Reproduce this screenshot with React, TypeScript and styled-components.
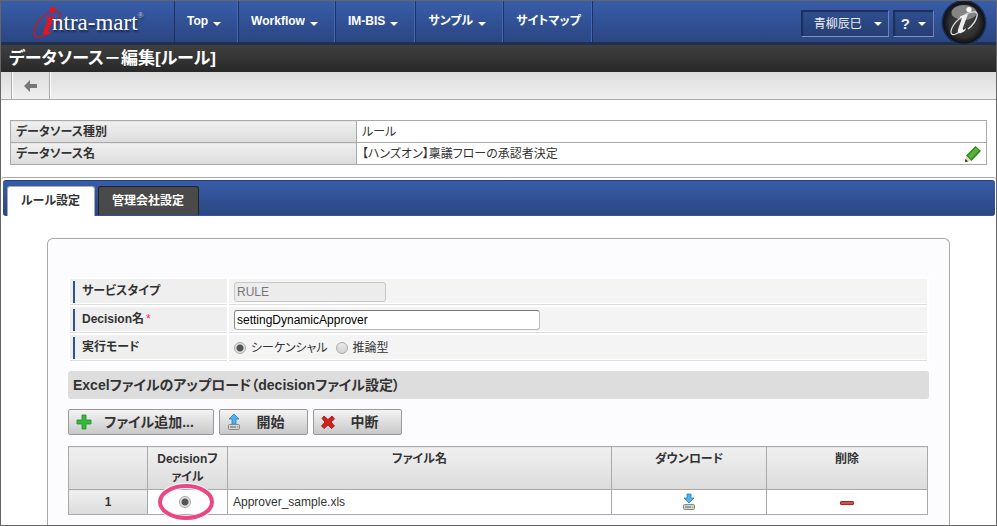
import React from "react";
import styled, { createGlobalStyle, css } from "styled-components";

const GlobalStyle = createGlobalStyle`
  *, *::before, *::after { box-sizing: border-box; }
  body {
    margin: 0;
    background: #fff;
    color: #333;
    font: 12px/18px "Liberation Sans", "Noto Sans CJK JP", sans-serif;
    font-feature-settings: "palt";
  }
  button, input { font: inherit; font-feature-settings: inherit; }
`;

const line = "#a9a9a9";
const blueGradient = "linear-gradient(#385da9, #2b4682)";
const greyGradient = "linear-gradient(#f0f0f0, #dcdcdc)";

const Page = styled.div`
  display: flex;
  flex-direction: column;
  height: 100vh;
  overflow: hidden;
  border: 1px solid #666;
`;

const Header = styled.header`
  display: flex;
  flex: none;
  height: 44px;
  border-bottom: 3px solid #20304f;
  background: ${blueGradient};
`;

const Logo = styled.a`
  display: flex;
  width: 173px;
  padding: 4px 0 0 31px;
  color: #fff;
  text-decoration: none;
  font: 23px/36px "Liberation Serif", serif;
  text-shadow: 1px 2px 2px rgba(0, 0, 0, 0.5);
  svg { flex: none; margin-right: -12px; }
  sup { font-size: 8px; line-height: 22px; color: #c8d2e8; }
`;

const Nav = styled.nav`
  display: flex;
  border-right: 1px solid #1e3260;
`;

const NavLink = styled.a`
  display: flex;
  align-items: center;
  gap: 5px;
  padding: 0 16px 2px 12px;
  border-left: 1px solid #1e3260;
  border-right: 1px solid #4069c0;
  color: #fff;
  font-weight: bold;
  text-decoration: none;
  white-space: nowrap;
  &:last-child { padding-right: 10px; }
`;

const Caret = styled.span<{ $low?: boolean }>`
  border: 4px solid transparent;
  border-top-color: #fff;
  border-bottom: 0;
  ${(p) => p.$low && css`margin-top: 7px;`}
`;

const HeaderTools = styled.div`
  display: flex;
  flex: 1;
  align-items: flex-start;
  justify-content: flex-end;
  gap: 4px;
  padding-right: 9px;
`;

const MenuButton = styled.button`
  display: flex;
  align-items: center;
  gap: 12px;
  height: 27px;
  margin-top: 9px;
  padding: 0 6px 0 12px;
  border: 1px solid #1c2e5a;
  border-bottom-color: #7b93c6;
  border-right-color: #6882bb;
  background: linear-gradient(#2f4f91, #263e72);
  box-shadow: inset 1px 1px 1px #1c2e5a;
  color: #eee;
`;

const HelpButton = styled(MenuButton)`
  gap: 8px;
  padding: 0 7px;
  font-size: 15px;
  font-weight: bold;
`;

const Badge = styled.a`
  height: 45px;
  margin: -1px 0 0 3px;
  z-index: 1;
`;

const TitleBar = styled.h1`
  flex: none;
  height: 27px;
  margin: 0;
  padding: 0 8px;
  background: linear-gradient(#404040, #282828);
  color: #fff;
  font-size: 17px;
  line-height: 28px;
`;

const Toolbar = styled.div`
  display: flex;
  flex: none;
  height: 28px;
  padding-left: 10px;
  border-bottom: 1px solid ${line};
  background: linear-gradient(#dcdcdc, #f0f0f0);
`;

const BackButton = styled.button`
  width: 39px;
  padding: 0;
  border: solid ${line};
  border-width: 0 1px;
  background: none;
  box-shadow: inset 1px 0 #fff, 1px 0 #fff;
  svg { display: block; margin: 0 auto; }
`;

const InfoTable = styled.table`
  width: calc(100% - 18px);
  margin: 20px 9px 12px;
  border-collapse: collapse;
  table-layout: fixed;
  th, td {
    height: 22px;
    padding: 0 5px;
    border: 1px solid ${line};
    line-height: 20px;
    text-align: left;
  }
  th { width: 346px; background: ${greyGradient}; }
`;

const InfoValue = styled.div`
  display: flex;
  align-items: center;
  justify-content: space-between;
  height: 21px;
`;

const IconButton = styled.button`
  padding: 0;
  border: 0;
  background: none;
  line-height: 0;
`;

const Panel = styled.main`
  display: flex;
  flex: 1;
  flex-direction: column;
  min-height: 0;
  padding-top: 2px;
  border-top: 1px solid ${line};
  border-radius: 3px 3px 0 0;
`;

const Tabs = styled.div`
  display: flex;
  flex: none;
  gap: 3px;
  height: 36px;
  margin: 0 1px 0 2px;
  padding: 5px 4px 0;
  border: 1px solid #2f519c;
  border-width: 1px 0;
  border-top-color: #24407c;
  border-radius: 3px;
  background: ${blueGradient};
`;

const Tab = styled.button<{ $active?: boolean }>`
  padding: 0 14px 1px 13px;
  border: 1px solid ${(p) => (p.$active ? "#aaa" : "#222")};
  border-bottom: 0;
  border-radius: 3px 3px 0 0;
  background: ${(p) => (p.$active ? "#fff" : "#4a4a4a")};
  color: ${(p) => (p.$active ? "#333" : "#fff")};
  font-weight: bold;
  ${(p) => p.$active && css`margin-bottom: -1px;`}
`;

const Box = styled.section`
  flex: 1;
  min-height: 0;
  margin: 22px 46px 0;
  padding: 38px 20px 0;
  border: 1px solid ${line};
  border-bottom: 0;
  border-radius: 6px 6px 0 0;
  background: #fcfcfe;
`;

const FormTable = styled.table`
  width: 100%;
  border-spacing: 2px;
  table-layout: fixed;
  background: #fff;
  th, td {
    height: 26px;
    border-bottom: 1px solid #ddd;
    box-shadow: inset 0 -1px #fff;
    text-align: left;
  }
  th { width: 157px; padding: 0 3px; background: #efefef; }
  td { padding: 0 5px; background: #f4f4f4; }
`;

const FieldLabel = styled.label`
  display: block;
  height: 22px;
  padding-left: 7px;
  border-left: 2px solid #2f519c;
  line-height: 20px;
`;

const Required = styled.span`
  margin-left: 2px;
  color: #e33;
  font-weight: normal;
`;

const TextInput = styled.input<{ $width: number }>`
  display: block;
  width: ${(p) => p.$width}px;
  height: 20px;
  padding: 0 2px;
  border: 1px solid #bbb;
  border-top-color: #777;
  border-left-color: #888;
  border-radius: 3px;
  background: #fff;
  color: #000;
  &:disabled { border-color: #c8c8c8; background: #ececec; color: #777; }
`;

const Radios = styled.div`
  display: flex;
  align-items: center;
  gap: 8px;
  label { display: flex; align-items: center; gap: 5px; }
`;

const Radio = styled.input`
  appearance: none;
  width: 12px;
  height: 12px;
  margin: 0;
  border: 1px solid #aaa;
  border-radius: 50%;
  background: linear-gradient(#e8e8e8, #d4d4d4);
  &:checked { background: radial-gradient(#555 0 3px, #e2e2e2 4px); }
`;

const SectionTitle = styled.h2`
  height: 28px;
  margin: 8px 0 10px;
  padding: 0 5px;
  border-radius: 3px;
  background: #ddd;
  font-size: 14px;
  line-height: 28px;
`;

const Actions = styled.div`
  display: flex;
  gap: 5px;
  margin-bottom: 11px;
`;

const ActionButton = styled.button<{ $wide?: boolean }>`
  display: flex;
  align-items: center;
  width: ${(p) => (p.$wide ? 146 : 89)}px;
  height: 26px;
  padding: 0 8px 0 6px;
  border: 1px solid #999;
  border-radius: 2px;
  background: linear-gradient(#f4f4f4, #c8c8c8);
  color: #333;
  font-size: 14px;
  font-weight: bold;
  line-height: 20px;
  svg { flex: none; }
  span { flex: 1; }
`;

const FileTable = styled.table`
  width: calc(100% - 1px);
  border-collapse: collapse;
  table-layout: fixed;
  th, td {
    height: 25px;
    padding: 0 5px;
    border: 1px solid ${line};
    background: #fff;
    text-align: center;
  }
  th { background: ${greyGradient}; }
  thead th { height: 43px; padding: 3px 5px; vertical-align: top; }
  td svg { display: inline-block; vertical-align: middle; }
`;

const Column = styled.col<{ $width: number }>`
  width: ${(p) => p.$width}px;
`;

const NameCell = styled.td`
  && { text-align: left; }
`;

const MarkedRadio = styled.div`
  position: relative;
  display: flex;
  justify-content: center;
  padding-right: 5px;
`;

const Mark = styled.svg`
  position: absolute;
  top: -15px;
  left: 3px;
  pointer-events: none;
`;

const LogoMark = () => (
  <svg width="32" height="36" viewBox="0 0 32 36" fill="none">
    <path d="M14 29C8 33 2 34 2 28C2 20 10 10 18 7C24 5 28 6 28 10C28 14 25 19 21 22" stroke="#d8131c" strokeWidth="1.3" />
    <path d="M14 12.500l8-1.500-5 13.500c-1 3 0 3.500 2.500 1.500l-.5 1.500c-4 4-9.500 3-7.500-2L16 14.500l-2-.5z" fill="#e8131c" />
    <circle cx="20.500" cy="5" r="3" fill="#e8131c" />
  </svg>
);

const InfoBadge = () => (
  <svg width="46" height="45" viewBox="0 0 46 45" fill="none">
    <defs>
      <radialGradient id="disc">
        <stop offset="0" stopColor="#444" />
        <stop offset="0.7" stopColor="#303030" />
        <stop offset="1" stopColor="#0c0f16" />
      </radialGradient>
    </defs>
    <circle cx="23" cy="22.500" r="22.500" fill="#1a2c54" />
    <circle cx="23" cy="22.500" r="21" fill="url(#disc)" />
    <ellipse cx="23" cy="12.500" rx="12.500" ry="7.500" fill="#858585" />
    <path d="M22 29C17 34 10 37 10 32C10 26 18 17 26 13.500C33 10.500 37 11.500 36 16C35 21 31 26 27 29" stroke="#ddd" strokeWidth="1.300" />
    <path d="M19 16.500l8-2.500-5 13.500c-1 3 0 3.500 3 .5l-.5 2c-4 4.500-9 4-7.500-.5L21 18l-2-.5z" fill="#eee" />
    <circle cx="28" cy="9.500" r="2.600" fill="#fff" />
  </svg>
);

const BackArrow = () => (
  <svg width="14" height="12" viewBox="0 0 14 12">
    <path d="M0 6l6-6v4h7v4H6v4z" fill="#777" />
  </svg>
);

const Pencil = () => (
  <svg width="16" height="16" viewBox="0 0 16 16">
    <path d="M0 16l1-6 5 5z" fill="#e8d3b4" />
    <path d="M0 16l.5-3 2.500 2.500z" fill="#222" />
    <path d="M1 9.500L10.500 0 16 5l-9.500 10z" fill="#2f8a1c" />
    <path d="M3 9.500L11 1.500l3 3-8 8.500z" fill="#5cb037" />
  </svg>
);

const Plus = () => (
  <svg width="18" height="16" viewBox="0 0 18 16">
    <path d="M7 1h4v5h5v4h-5v5H7v-5H2V6h5z" fill="#35b93e" stroke="#1e8a2b" strokeWidth="0.8" />
  </svg>
);

const Cross = () => (
  <svg width="16" height="16" viewBox="0 0 16 16">
    <path d="M4 2l4 3.500L12 2l2.500 3L11 8l3.500 4-3 2.500L8 11l-4 3.500L1.500 12 5 8 2 4.500z" fill="#d3201c" stroke="#971310" strokeWidth="0.8" />
  </svg>
);

const Drive = ({ up }: { up?: boolean }) => (
  <svg width="16" height="18" viewBox="0 0 16 18">
    <path
      d={up ? "M8 1l5 5h-3v5H6V6H3z" : "M6 1h4v4h3l-5 5-5-5h3z"}
      fill="#4fb4ee"
      stroke="#2a7dbd"
      strokeWidth="0.8"
    />
    <rect x="2.500" y="11.500" width="11" height="5" rx="1" fill="#d4d4d4" stroke="#888" />
    <path d="M4 14h6" stroke="#666" />
    <path d="M11 14h1.500" stroke="#49c34c" />
  </svg>
);

const Minus = () => (
  <svg width="14" height="4" viewBox="0 0 14 4">
    <rect x="0.500" y="0.500" width="13" height="3" rx="0.500" fill="#dd4a4a" stroke="#a92626" />
  </svg>
);

const navItems = [
  { label: "Top", menu: true },
  { label: "Workflow", menu: true },
  { label: "IM-BIS", menu: true },
  { label: "サンプル", menu: true },
  { label: "サイトマップ", menu: false },
];

export default function App() {
  return (
    <Page>
      <GlobalStyle />
      <Header>
        <Logo href="#" aria-label="intra-mart">
          <LogoMark />
          <span>ntra-mart</span>
          <sup>®</sup>
        </Logo>
        <Nav>
          {navItems.map((item) => (
            <NavLink href="#" key={item.label}>
              {item.label}
              {item.menu && <Caret $low />}
            </NavLink>
          ))}
        </Nav>
        <HeaderTools>
          <MenuButton type="button">
            青柳辰巳
            <Caret />
          </MenuButton>
          <HelpButton type="button">
            ?
            <Caret />
          </HelpButton>
          <Badge href="#" aria-label="intra-mart">
            <InfoBadge />
          </Badge>
        </HeaderTools>
      </Header>
      <TitleBar>データソース－編集[ルール]</TitleBar>
      <Toolbar>
        <BackButton type="button" aria-label="戻る">
          <BackArrow />
        </BackButton>
      </Toolbar>
      <InfoTable>
        <tbody>
          <tr>
            <th scope="row">データソース種別</th>
            <td>ルール</td>
          </tr>
          <tr>
            <th scope="row">データソース名</th>
            <td>
              <InfoValue>
                【ハンズオン】稟議フローの承認者決定
                <IconButton type="button" aria-label="編集">
                  <Pencil />
                </IconButton>
              </InfoValue>
            </td>
          </tr>
        </tbody>
      </InfoTable>
      <Panel>
        <Tabs role="tablist">
          <Tab type="button" role="tab" aria-selected="true" $active>
            ルール設定
          </Tab>
          <Tab type="button" role="tab" aria-selected="false">
            管理会社設定
          </Tab>
        </Tabs>
        <Box>
          <FormTable>
            <tbody>
              <tr>
                <th scope="row">
                  <FieldLabel htmlFor="service">サービスタイプ</FieldLabel>
                </th>
                <td>
                  <TextInput id="service" $width={152} defaultValue="RULE" disabled />
                </td>
              </tr>
              <tr>
                <th scope="row">
                  <FieldLabel htmlFor="decision">
                    Decision名<Required>*</Required>
                  </FieldLabel>
                </th>
                <td>
                  <TextInput id="decision" $width={306} defaultValue="settingDynamicApprover" />
                </td>
              </tr>
              <tr>
                <th scope="row">
                  <FieldLabel as="div" id="mode">実行モード</FieldLabel>
                </th>
                <td>
                  <Radios role="radiogroup" aria-labelledby="mode">
                    <label>
                      <Radio type="radio" name="mode" defaultChecked />
                      シーケンシャル
                    </label>
                    <label>
                      <Radio type="radio" name="mode" />
                      推論型
                    </label>
                  </Radios>
                </td>
              </tr>
            </tbody>
          </FormTable>
          <SectionTitle>Excelファイルのアップロード（decisionファイル設定）</SectionTitle>
          <Actions>
            <ActionButton type="button" $wide>
              <Plus />
              <span>ファイル追加...</span>
            </ActionButton>
            <ActionButton type="button">
              <Drive up />
              <span>開始</span>
            </ActionButton>
            <ActionButton type="button">
              <Cross />
              <span>中断</span>
            </ActionButton>
          </Actions>
          <FileTable>
            <colgroup>
              <Column $width={79} />
              <Column $width={80} />
              <col />
              <Column $width={155} />
              <Column $width={161} />
            </colgroup>
            <thead>
              <tr>
                <th />
                <th scope="col">Decisionファイル</th>
                <th scope="col">ファイル名</th>
                <th scope="col">ダウンロード</th>
                <th scope="col">削除</th>
              </tr>
            </thead>
            <tbody>
              <tr>
                <th scope="row">1</th>
                <td>
                  <MarkedRadio>
                    <Radio type="radio" name="file" aria-label="Approver_sample.xls" defaultChecked />
                    <Mark width="60" height="42" viewBox="0 0 60 42" fill="none">
                      <ellipse cx="30" cy="21" rx="26" ry="16" stroke="#fff" strokeWidth="6" />
                      <ellipse cx="30" cy="21" rx="26" ry="16" stroke="#ee4585" strokeWidth="4" />
                    </Mark>
                  </MarkedRadio>
                </td>
                <NameCell>Approver_sample.xls</NameCell>
                <td>
                  <IconButton type="button" aria-label="ダウンロード">
                    <Drive />
                  </IconButton>
                </td>
                <td>
                  <IconButton type="button" aria-label="削除">
                    <Minus />
                  </IconButton>
                </td>
              </tr>
            </tbody>
          </FileTable>
        </Box>
      </Panel>
    </Page>
  );
}
